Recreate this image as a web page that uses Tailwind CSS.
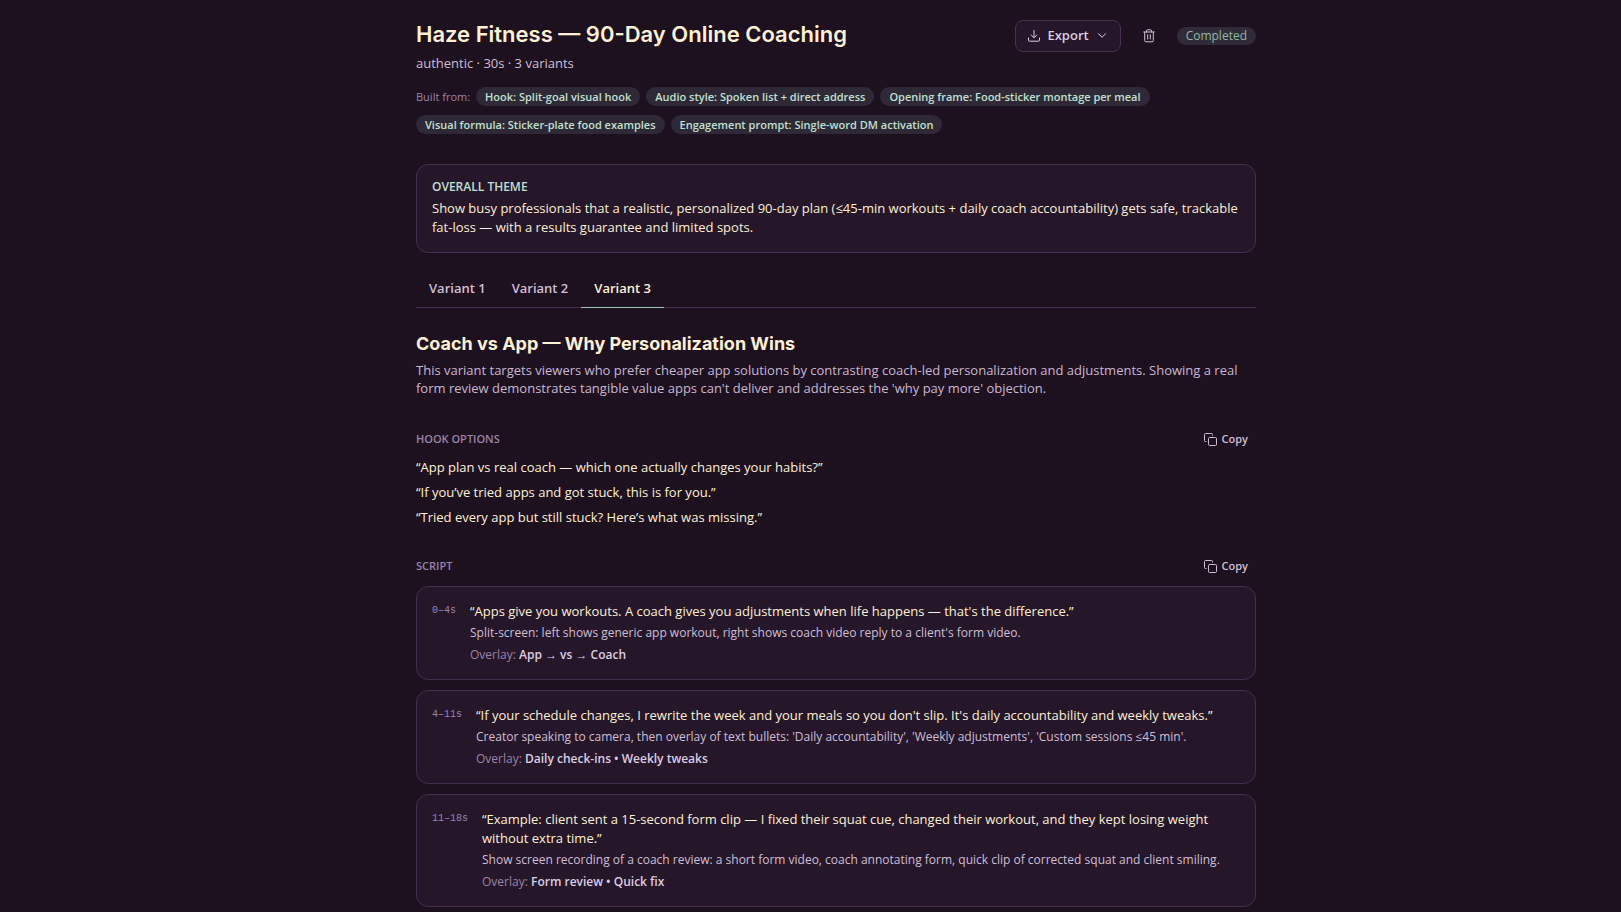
<!DOCTYPE html>
<html lang="en">
<head>
<meta charset="utf-8">
<meta name="viewport" content="width=device-width, initial-scale=1">
<title>Haze Fitness — 90-Day Online Coaching</title>
<script src="https://cdn.jsdelivr.net/npm/@tailwindcss/browser@4"></script>
</head>
<body class="min-h-screen bg-[#1d101f] font-['Open_Sans',sans-serif] text-[13px] text-[#cfbfd6]">
<main class="pl-16 pr-[13px] pt-5">
<div class="mx-auto max-w-[840px]">

  <header>
    <div class="flex items-start justify-between gap-4">
      <div>
        <h1 class="font-['Inter',sans-serif] text-[22px] leading-7 font-semibold text-[#fdf0d5]">Haze Fitness — 90-Day Online Coaching</h1>
        <p class="mt-[5px] text-[13px] leading-5">authentic · 30s · 3 variants</p>
      </div>
      <div class="flex items-center gap-4">
        <button type="button" class="flex h-8 items-center gap-[7px] rounded-lg border border-[#472e4e] bg-[#25162a] px-3 text-[13px] font-semibold text-[#dccde2]">
          <svg class="size-3" viewBox="0 0 12 12" fill="none" stroke="currentColor" stroke-linecap="round" stroke-linejoin="round" aria-hidden="true"><path d="M6 .5v7M3.2 5 6 7.8 8.800 5M.5 8v2.200a1 1 0 0 0 1 1h9a1 1 0 0 0 1-1V8"/></svg>
          Export
          <svg class="size-3" viewBox="0 0 12 12" fill="none" stroke="currentColor" stroke-linecap="round" stroke-linejoin="round" aria-hidden="true"><path d="m2.500 3.700 3.500 3.600 3.500-3.600"/></svg>
        </button>
        <button type="button" aria-label="Delete" class="flex size-6 items-center justify-center text-[#cfbfd6]">
          <svg class="h-[14px] w-3" viewBox="0 0 12 14" fill="none" stroke="currentColor" stroke-linecap="round" stroke-linejoin="round" aria-hidden="true"><path d="M.7 3h10.600M3.500 3V1.800a1 1 0 0 1 1-1h3a1 1 0 0 1 1 1V3M1.700 3v8.500a1.300 1.300 0 0 0 1.300 1.300h6a1.300 1.300 0 0 0 1.300-1.300V3M4.700 5.700v4.300M7.300 5.700v4.300"/></svg>
        </button>
        <span class="rounded-full bg-[#312a38] px-[9px] text-xs leading-[18px] text-[#8fb9a8]">Completed</span>
      </div>
    </div>

    <div class="mt-[14px] flex flex-wrap items-center gap-x-[6px] gap-y-[9px] text-[11px] leading-[19px] font-semibold text-[#c0e0d2]">
      <span class="font-normal text-[#9c83a8]">Built from:</span>
      <span class="rounded-full bg-[#2f2836] px-[9px]">Hook: Split-goal visual hook</span>
      <span class="rounded-full bg-[#2f2836] px-[9px]">Audio style: Spoken list + direct address</span>
      <span class="rounded-full bg-[#2f2836] px-[9px]">Opening frame: Food-sticker montage per meal</span>
      <span class="rounded-full bg-[#2f2836] px-[9px]">Visual formula: Sticker-plate food examples</span>
      <span class="rounded-full bg-[#2f2836] px-[9px]">Engagement prompt: Single-word DM activation</span>
    </div>
  </header>

  <section class="mt-[30px] rounded-xl border border-[#472e4e] bg-[#25162a] px-[15px] pt-[14px] pb-[15px]">
    <h2 class="text-xs leading-4 font-semibold text-[#c0e0d2]">OVERALL THEME</h2>
    <p class="mt-1 text-[13px] leading-[19px] text-[#fdf0d5]">Show busy professionals that a realistic, personalized 90-day plan (≤45-min workouts + daily coach accountability) gets safe, trackable fat-loss — with a results guarantee and limited spots.</p>
  </section>

  <div role="tablist" class="mt-4 flex items-start border-b border-[#472e4e] text-[13px] leading-[22px] font-semibold">
    <button type="button" role="tab" aria-selected="false" class="-mb-px border-b border-transparent px-[13px] py-2">Variant 1</button>
    <button type="button" role="tab" aria-selected="false" class="-mb-px border-b border-transparent px-[13px] py-2">Variant 2</button>
    <button type="button" role="tab" aria-selected="true" class="-mb-px border-b border-[#9cc5b4] px-[13px] py-2 text-[#fdf0d5]">Variant 3</button>
  </div>

  <section class="mt-6">
    <h2 class="font-['Inter',sans-serif] text-lg leading-6 font-bold text-[#fdf0d5]">Coach vs App — Why Personalization Wins</h2>
    <p class="mt-[5px] text-[13px] leading-[18px] text-[#c9b8d1]">This variant targets viewers who prefer cheaper app solutions by contrasting coach-led personalization and adjustments. Showing a real form review demonstrates tangible value apps can't deliver and addresses the 'why pay more' objection.</p>
  </section>

  <section class="mt-[30px]">
    <div class="flex h-6 items-center justify-between">
      <h3 class="text-[11px] font-semibold text-[#9c83a8]">HOOK OPTIONS</h3>
      <button type="button" class="flex items-center gap-[5px] px-2 text-[11px] font-semibold">
        <svg class="size-[13px]" viewBox="0 0 13 13" fill="none" stroke="currentColor" stroke-linecap="round" stroke-linejoin="round" aria-hidden="true"><rect x="4.500" y="4.500" width="8" height="8" rx="1"/><path d="M2.200 8.500h-.7a1 1 0 0 1-1-1v-6a1 1 0 0 1 1-1h6a1 1 0 0 1 1 1v.7"/></svg>
        Copy
      </button>
    </div>
    <ul class="mt-[6px] flex flex-col gap-[5px] text-[13px] leading-5 font-medium text-[#fdf0d5]">
      <li>“App plan vs real coach — which one actually changes your habits?”</li>
      <li>“If you’ve tried apps and got stuck, this is for you.”</li>
      <li>“Tried every app but still stuck? Here’s what was missing.”</li>
    </ul>
  </section>

  <section class="mt-[27px] pb-1">
    <div class="flex h-6 items-center justify-between">
      <h3 class="text-[11px] font-semibold text-[#9c83a8]">SCRIPT</h3>
      <button type="button" class="flex items-center gap-[5px] px-2 text-[11px] font-semibold">
        <svg class="size-[13px]" viewBox="0 0 13 13" fill="none" stroke="currentColor" stroke-linecap="round" stroke-linejoin="round" aria-hidden="true"><rect x="4.500" y="4.500" width="8" height="8" rx="1"/><path d="M2.200 8.500h-.7a1 1 0 0 1-1-1v-6a1 1 0 0 1 1-1h6a1 1 0 0 1 1 1v.7"/></svg>
        Copy
      </button>
    </div>
    <ol class="mt-2 flex flex-col gap-[10px]">
      <li class="flex gap-[14px] rounded-xl border border-[#472e4e] bg-[#25162a] p-[15px]">
        <span class="shrink-0 font-['Liberation_Mono',monospace] text-[10px] leading-[18px] text-[#9c83a8]">0–4s</span>
        <div class="text-xs leading-[19px]">
          <p class="text-[13px] leading-[19px] font-medium text-[#fdf0d5]">“Apps give you workouts. A coach gives you adjustments when life happens — that's the difference.”</p>
          <p class="mt-[2px]">Split-screen: left shows generic app workout, right shows coach video reply to a client's form video.</p>
          <p class="mt-[3px]"><span class="text-[#9c83a8]">Overlay:</span> <span class="font-semibold text-[#dccde2]">App → vs → Coach</span></p>
        </div>
      </li>
      <li class="flex gap-[14px] rounded-xl border border-[#472e4e] bg-[#25162a] p-[15px]">
        <span class="shrink-0 font-['Liberation_Mono',monospace] text-[10px] leading-[18px] text-[#9c83a8]">4–11s</span>
        <div class="text-xs leading-[19px]">
          <p class="text-[13px] leading-[19px] font-medium text-[#fdf0d5]">“If your schedule changes, I rewrite the week and your meals so you don't slip. It's daily accountability and weekly tweaks.”</p>
          <p class="mt-[2px]">Creator speaking to camera, then overlay of text bullets: 'Daily accountability', 'Weekly adjustments', 'Custom sessions ≤45 min'.</p>
          <p class="mt-[3px]"><span class="text-[#9c83a8]">Overlay:</span> <span class="font-semibold text-[#dccde2]">Daily check-ins • Weekly tweaks</span></p>
        </div>
      </li>
      <li class="flex gap-[14px] rounded-xl border border-[#472e4e] bg-[#25162a] p-[15px]">
        <span class="shrink-0 font-['Liberation_Mono',monospace] text-[10px] leading-[18px] text-[#9c83a8]">11–18s</span>
        <div class="text-xs leading-[19px]">
          <p class="text-[13px] leading-[19px] font-medium text-[#fdf0d5]">“Example: client sent a 15-second form clip — I fixed their squat cue, changed their workout, and they kept losing weight without extra time.”</p>
          <p class="mt-[2px]">Show screen recording of a coach review: a short form video, coach annotating form, quick clip of corrected squat and client smiling.</p>
          <p class="mt-[3px]"><span class="text-[#9c83a8]">Overlay:</span> <span class="font-semibold text-[#dccde2]">Form review • Quick fix</span></p>
        </div>
      </li>
    </ol>
  </section>

</div>
</main>
</body>
</html>
